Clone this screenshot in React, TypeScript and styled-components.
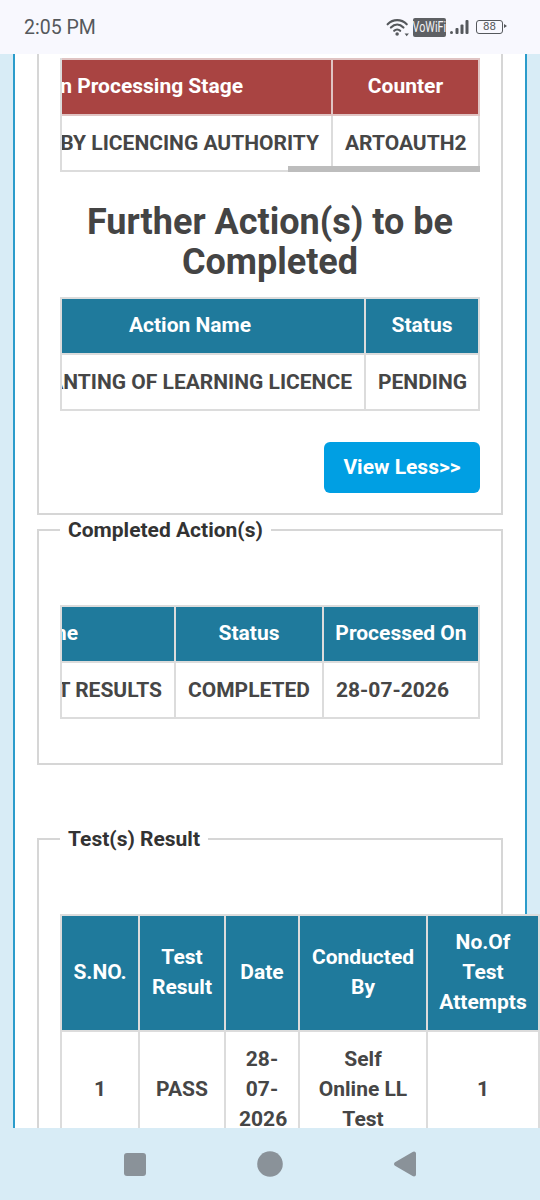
import React from 'react';
import styled, { createGlobalStyle } from 'styled-components';

const GlobalStyle = createGlobalStyle`
  html, body {
    margin: 0;
    padding: 0;
    background: #d8ecf6;
    font-family: Roboto, "Liberation Sans", sans-serif;
  }
`;

const Shell = styled.div`
  width: 540px;
  height: 1200px;
  display: flex;
  flex-direction: column;
  overflow: hidden;
`;

const StatusBar = styled.div`
  height: 54px;
  flex: none;
  box-sizing: border-box;
  padding: 0 37px 0 24px;
  background: #f8f8fe;
  display: flex;
  align-items: center;
  justify-content: space-between;
`;

const Clock = styled.span`
  font-size: 19.5px;
  color: #55585c;
`;

const StatusIcons = styled.div`
  display: flex;
  align-items: center;
  gap: 3px;
  color: #55585c;
`;

const VoWifi = styled.span`
  display: flex;
  justify-content: center;
  background: #5e6064;
  border-radius: 2px;
  height: 19px;
  width: 33px;
`;

const VoWifiLabel = styled.span`
  flex: none;
  color: #f2f2f6;
  font-size: 15px;
  line-height: 19px;
  transform: scaleX(0.72);
`;

const Battery = styled.span`
  position: relative;
  box-sizing: border-box;
  width: 27px;
  height: 14px;
  margin-left: 4px;
  border: 1.5px solid #55585c;
  border-radius: 3px;
  font-size: 11.5px;
  line-height: 11px;
  text-align: center;

  &::after {
    content: '';
    position: absolute;
    right: -5px;
    top: 3px;
    border-left: 3px solid #55585c;
    border-top: 2px solid transparent;
    border-bottom: 2px solid transparent;
  }
`;

const Viewport = styled.div`
  flex: 1;
  min-height: 0;
  overflow: hidden;
`;

const Page = styled.div`
  box-sizing: border-box;
  width: 514px;
  margin-left: 13px;
  padding: 0 22px;
  background: #fff;
  border-left: 2px solid #2b9ccb;
  border-right: 2px solid #2b9ccb;
`;

const TopCard = styled.div`
  box-sizing: border-box;
  height: 461px;
  padding: 4px 21px 0;
  border: 2px solid #d6d6d6;
  border-top: 0;
`;

const Card = styled.fieldset<{ $gap?: number }>`
  margin: ${(p) => p.$gap ?? 0}px 0 0;
  padding: 0 21px 44px;
  min-width: 0;
  border: 2px solid #d6d6d6;
`;

const Legend = styled.legend`
  margin-left: 0;
  padding: 0 8px;
  font-size: 21px;
  line-height: 30px;
  font-weight: 700;
  color: #333;
`;

const ScrollArea = styled.div<{ $top?: number }>`
  position: relative;
  box-sizing: border-box;
  display: flex;
  justify-content: flex-end;
  width: 420px;
  margin-top: ${(p) => p.$top ?? 0}px;
  border-left: 2px solid #dcdcdc;
  overflow: hidden;
`;

const FlowTable = styled.div<{ $top: number }>`
  width: 479px;
  margin-top: ${(p) => p.$top}px;
`;

const Grid = styled.table<{ $w: number }>`
  flex: none;
  width: ${(p) => p.$w}px;
  border-collapse: collapse;
  table-layout: fixed;
  background: #fff;
`;

const Th = styled.th<{ $w: number; $bg: string; $line: string }>`
  width: ${(p) => p.$w}px;
  box-sizing: border-box;
  padding: 11px 10px 13px;
  background: ${(p) => p.$bg};
  border: 2px solid ${(p) => p.$line};
  color: #fff;
  font-size: 21px;
  line-height: 30px;
  font-weight: 700;
  text-align: center;
`;

// single line cells sit a pixel left of centre, wrapped ones don't
const Td = styled.td<{ $nowrap?: boolean; $align?: string }>`
  box-sizing: border-box;
  padding: 12px ${(p) => (p.$align === 'right' ? 12 : p.$nowrap ? 14 : 13)}px 12px
    ${(p) => (p.$align === 'right' ? 0 : p.$nowrap ? 12 : 13)}px;
  border: 2px solid #dcdcdc;
  color: #464646;
  font-size: 21px;
  line-height: 30px;
  font-weight: 700;
  text-align: ${(p) => p.$align ?? 'center'};
  white-space: ${(p) => (p.$nowrap ? 'nowrap' : 'normal')};
`;

const ScrollThumb = styled.div`
  position: absolute;
  right: 0;
  bottom: 0;
  width: 192px;
  height: 6px;
  background: #bdbdbd;
`;

const Heading = styled.h2`
  margin: 30px 0 15px;
  font-size: 36px;
  line-height: 40px;
  font-weight: 700;
  color: #444;
  text-align: center;
`;

const ButtonRow = styled.div`
  display: flex;
  justify-content: flex-end;
  margin-top: 31px;
`;

const ViewButton = styled.button`
  width: 156px;
  height: 51px;
  padding-bottom: 2px;
  border: 0;
  border-radius: 6px;
  background: #009fe3;
  color: #fff;
  font-family: inherit;
  font-size: 21px;
  font-weight: 700;
`;

const NavBar = styled.div`
  height: 72px;
  flex: none;
  background: #d8ecf6;
  display: flex;
  align-items: center;
  justify-content: center;
  gap: 110px;
`;

const RED = '#a94442';
const RED_LINE = '#e0c4c3';
const TEAL = '#1f7a9c';
const TEAL_LINE = '#dcdcdc';

export default function App() {
  return (
    <Shell>
      <GlobalStyle />
      <StatusBar>
        <Clock>2:05 PM</Clock>
        <StatusIcons>
          <svg width="24" height="20" viewBox="0 0 22 18" fill="none" stroke="#55585c" strokeLinecap="round">
            <path d="M1.500 6.500C6.500 1.500 14 1.500 19 6.500" strokeWidth="2" />
            <path d="M4.500 9.500C8 6 12.500 6 16 9.500" strokeWidth="2" />
            <path d="M7.500 12.500C9 11 11.500 11 13 12.500" strokeWidth="2" />
            <circle cx="10.200" cy="15.500" r="1.600" fill="#55585c" stroke="none" />
            <path d="M17 15h4l-2 2.500z" fill="#55585c" stroke="none" />
          </svg>
          <VoWifi><VoWifiLabel>VoWiFi</VoWifiLabel></VoWifi>
          <svg width="20" height="17" viewBox="0 0 20 17" fill="#55585c">
            <rect x="1" y="12" width="3" height="3" rx="1.500" />
            <rect x="6.500" y="9" width="3" height="6" rx="1" />
            <rect x="11.500" y="5.500" width="3" height="9.500" rx="1" />
            <rect x="16.500" y="1" width="3" height="14" rx="1" />
          </svg>
          <Battery>88</Battery>
        </StatusIcons>
      </StatusBar>

      <Viewport>
        <Page>
          <TopCard>
            <ScrollArea>
              <Grid $w={603}>
                <thead>
                  <tr>
                    <Th $w={456} $bg={RED} $line={RED_LINE}>Application Processing Stage</Th>
                    <Th $w={147} $bg={RED} $line={RED_LINE}>Counter</Th>
                  </tr>
                </thead>
                <tbody>
                  <tr>
                    <Td $nowrap $align="right">APPROVAL BY LICENCING AUTHORITY</Td>
                    <Td $nowrap>ARTOAUTH2</Td>
                  </tr>
                </tbody>
              </Grid>
              <ScrollThumb />
            </ScrollArea>

            <Heading>Further Action(s) to be Completed</Heading>

            <ScrollArea>
              <Grid $w={464}>
                <thead>
                  <tr>
                    <Th $w={350} $bg={TEAL} $line={TEAL_LINE}>Action Name</Th>
                    <Th $w={114} $bg={TEAL} $line={TEAL_LINE}>Status</Th>
                  </tr>
                </thead>
                <tbody>
                  <tr>
                    <Td $nowrap $align="right">GRANTING OF LEARNING LICENCE</Td>
                    <Td $nowrap>PENDING</Td>
                  </tr>
                </tbody>
              </Grid>
            </ScrollArea>

            <ButtonRow>
              <ViewButton>View Less&gt;&gt;</ViewButton>
            </ButtonRow>
          </TopCard>

          <Card>
            <Legend>Completed Action(s)</Legend>
            <ScrollArea $top={60}>
              <Grid $w={620}>
                <thead>
                  <tr>
                    <Th $w={316} $bg={TEAL} $line={TEAL_LINE}>Action Name</Th>
                    <Th $w={148} $bg={TEAL} $line={TEAL_LINE}>Status</Th>
                    <Th $w={156} $bg={TEAL} $line={TEAL_LINE}>Processed On</Th>
                  </tr>
                </thead>
                <tbody>
                  <tr>
                    <Td $nowrap $align="right">LL TEST RESULTS</Td>
                    <Td $nowrap>COMPLETED</Td>
                    <Td $nowrap $align="left">28-07-2026</Td>
                  </tr>
                </tbody>
              </Grid>
            </ScrollArea>
          </Card>

          <Card $gap={59}>
            <Legend>Test(s) Result</Legend>
            <FlowTable $top={60}>
              <Grid $w={478}>
                <thead>
                  <tr>
                    <Th $w={78} $bg={TEAL} $line={TEAL_LINE}>S.NO.</Th>
                    <Th $w={86} $bg={TEAL} $line={TEAL_LINE}>Test Result</Th>
                    <Th $w={74} $bg={TEAL} $line={TEAL_LINE}>Date</Th>
                    <Th $w={128} $bg={TEAL} $line={TEAL_LINE}>Conducted By</Th>
                    <Th $w={112} $bg={TEAL} $line={TEAL_LINE}>No.Of Test Attempts</Th>
                  </tr>
                </thead>
                <tbody>
                  <tr>
                    <Td>1</Td>
                    <Td>PASS</Td>
                    <Td>28-07-2026</Td>
                    <Td>Self Online LL Test</Td>
                    <Td>1</Td>
                  </tr>
                </tbody>
              </Grid>
            </FlowTable>
          </Card>
        </Page>
      </Viewport>

      <NavBar>
        <svg width="24" height="24" viewBox="0 0 24 24"><rect x="1" y="1" width="22" height="23" rx="3" fill="#8a9299" /></svg>
        <svg width="26" height="26" viewBox="0 0 26 26"><circle cx="13" cy="13" r="12.800" fill="#8a9299" /></svg>
        <svg width="24" height="26" viewBox="0 0 24 26"><path d="M21 0.500c1.300 0 2 1 2 2v21c0 1.300-1 2-2 2-.5 0-1-.1-1.400-.4L2 14.800c-1.300-.8-1.300-2.800 0-3.600L19.600 1c.4-.3.900-.5 1.400-.5z" fill="#8a9299" /></svg>
      </NavBar>
    </Shell>
  );
}
